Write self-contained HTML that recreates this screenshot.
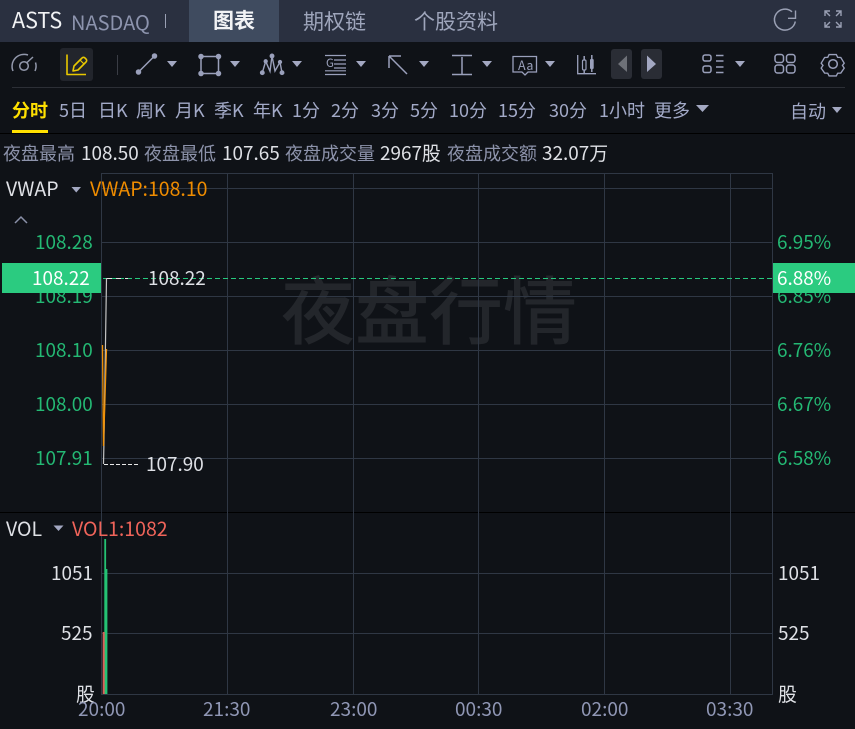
<!DOCTYPE html>
<html lang="zh">
<head>
<meta charset="utf-8">
<style>
html,body{margin:0;padding:0;background:#0f1217}
body{width:855px;height:729px;position:relative;overflow:hidden;font-family:"Noto Sans CJK SC","Liberation Sans",sans-serif}
.t{position:absolute;white-space:nowrap;line-height:24px;height:24px}
.tf{font-size:18px;color:#a3aac8;top:98px}
.g{color:#24b974;font-size:18.9px}
.w{color:#dfe1e6;font-size:18.9px}
.x{color:#9097b5;font-size:19px;top:697px}
.l{top:141px;font-size:18px;color:#8d93ab}
.v{top:141px;font-size:18.9px;color:#dfe1e6}
svg{position:absolute;left:0;top:0}
</style>
</head>
<body>
<div style="position:absolute;left:0;top:0;width:855px;height:42px;background:#2a3040"></div>
<div style="position:absolute;left:189px;top:0;width:90px;height:42px;background:#3f4b5f"></div>
<div style="position:absolute;left:60px;top:48px;width:33px;height:33px;background:#22252c;border-radius:3px"></div>
<div style="position:absolute;left:611px;top:49px;width:21px;height:30px;background:#2a2d35;border-radius:3px"></div>
<div style="position:absolute;left:641px;top:49px;width:21px;height:30px;background:#2a2d35;border-radius:3px"></div>

<div class="t" style="left:281px;top:264px;font-size:74px;line-height:86px;height:86px;color:#23262b;font-weight:500">夜盘行情</div>

<svg width="855" height="729" fill="none">
<!-- separators -->
<path d="M12 87.500H845" stroke="#2c2f36"/>
<path d="M0 133.500H855" stroke="#000"/>
<path d="M117.500 55V75" stroke="#3a3d45"/>
<!-- grid -->
<g stroke="#2f3744">
<path d="M0 512.500H855" stroke="#000"/>
<path d="M102 173.500H772.500M102 188.500H772M102 242.500H772M102 296.500H772M102 350.500H772M102 404.500H772M102 458.500H772"/>
<path d="M102 573.500H772M102 633.500H772M102 694.500H772"/>
<path d="M101.500 173V695M227.500 173V695M353.500 173V695M478.500 173V695M604.500 173V695M730.500 173V695M772.500 173V695"/>
</g>
<!-- dashed last price -->
<path d="M103 278.500H772" stroke="#26c97e" stroke-dasharray="5 3"/>
<path d="M107 278.500H128" stroke="#e8e8e8" stroke-dasharray="5 4"/>
<path d="M104 464.500H140" stroke="#e8e8e8" stroke-dasharray="4 2"/>
<!-- price lines -->
<path d="M103.500 464L104 440L106.500 278" stroke="#c4c4c4" stroke-width="1.200"/>
<path d="M102.500 345L103.500 446L106.500 349" stroke="#f0920a" stroke-width="1.300"/>
<!-- volume -->
<rect x="104.300" y="539" width="1.800" height="155" fill="#24c274"/>
<rect x="106" y="569" width="1.400" height="125" fill="#24c274"/>
<rect x="102.700" y="632" width="2" height="62" fill="#d9605a"/>

<!-- header icons -->
<g stroke="#9aa0b4" stroke-width="1.500">
<path d="M792 11.800A10.500 10.500 0 1 0 795.300 21.500"/>
<path d="M795.500 10.500V18.300H788" stroke-width="1.400"/>
<path d="M825 16V11H830M841 16V11H836M825 22V27H830M841 22V27H836M825.500 11.500L830 16M840.500 11.500L836 16M825.500 26.500L830 22M840.500 26.500L836 22" stroke-width="1.400"/>
</g>

<!-- toolbar icons -->
<g stroke="#9298ab" stroke-width="1.500">
<!-- gauge -->
<path d="M13 71A12 12 0 0 1 28 55M35.500 62.500A12 12 0 0 1 35 71"/>
<circle cx="24" cy="66" r="4.300"/>
<path d="M27 62.500L33 57"/>
</g>
<g stroke="#e9c900" stroke-width="1.600" stroke-linejoin="round">
<path d="M67 54.500V74.500H86"/>
<path d="M73 71l1-5 8-8a2 2 0 0 1 3 0l1 1a2 2 0 0 1 0 3l-8 8z"/>
<path d="M80 60l4 4" stroke-width="1.200"/>
</g>
<g stroke="#9aa0bb" stroke-width="1.500" fill="#9aa0bb">
<!-- line -->
<path d="M139 71.500L154 56.500"/>
<circle cx="138.500" cy="72" r="2"/>
<circle cx="154.500" cy="56" r="2"/>
<!-- rect -->
<path fill="none" d="M201 56.500H218.500V73.500H201Z"/>
<circle cx="201" cy="56.500" r="2"/><circle cx="218.500" cy="56.500" r="2"/>
<circle cx="201" cy="73.500" r="2"/><circle cx="218.500" cy="73.500" r="2"/>
<!-- wave -->
<path fill="none" stroke-width="1.400" d="M262.300 72.700L265.700 61.300L270 71.300L272 56L275 71L280 62L282 72.700"/>
<circle cx="262.300" cy="72.700" r="1.700"/><circle cx="265.700" cy="61.300" r="1.400"/><circle cx="272" cy="56" r="1.700"/><circle cx="280" cy="62" r="1.400"/><circle cx="282" cy="72.700" r="1.700"/>
</g>
<g stroke="#9aa0bb" stroke-width="1.500">
<!-- fib -->
<path d="M325 55.500H346M334 60H346M334 64H346M334 68H346M325 70.800H346M325 74.500H346" stroke-width="1.200"/>
<!-- arrow -->
<path d="M389 56V68M389 56H401M389.500 56.500L407 74"/>
<!-- text T -->
<path d="M452 55.500H472M452 74.500H472M462 57V74"/>
<!-- Aa -->
<path d="M513 56.500H536.500V72H528L525 75L522 72H513Z" fill="none" stroke-width="1.300"/>
<!-- chart -->
<path d="M577.700 55V73.700H596" stroke-width="1.300"/>
<path d="M584.200 56V73M591.800 55V72"/>
<!-- list -->
<rect x="703" y="55" width="8" height="6" rx="2" fill="none"/><rect x="703" y="66" width="8" height="6.500" rx="2" fill="none"/>
<path d="M716 55.500H723.500M716 61H723.500M716 67H723.500M716 72.500H723.500"/>
<!-- grid -->
<rect x="775" y="54.500" width="8.500" height="8" rx="2.500" fill="none"/><rect x="786.500" y="54.500" width="8.500" height="8" rx="2.500" fill="none"/>
<rect x="775" y="65" width="8.500" height="8" rx="2.500" fill="none"/><rect x="786.500" y="65" width="8.500" height="8" rx="2.500" fill="none"/>
<!-- gear -->
<path fill="none" d="M829 54h8l1.500 3 3.500.2 3.800 6.300-2 2.500 2 3-3.800 5.500-3.500.2-1.500 3h-8l-1.500-3-3.500-.2-3.800-5.500 2-3-2-2.500 3.800-6.300 3.500-.2z" transform="translate(83 6) scale(.9)"/>
<circle cx="833" cy="64" r="4.300" fill="none"/>
</g>
<rect x="582.500" y="60" width="3.500" height="10" rx="1.200" fill="#0f1217" stroke="#9aa0bb" stroke-width="1.200"/>
<rect x="590" y="59" width="3.700" height="10" rx="1" fill="#9aa0bb"/>
<!-- toolbar carets -->
<g fill="#a3a8c2">
<path d="M167 61h10l-5 6zM230 61h10l-5 6zM292 61h10l-5 6zM356 61h10l-5 6zM419 61h10l-5 6zM482 61h10l-5 6zM545 61h10l-5 6zM735 61h10l-5 6z"/>
<path d="M696 105h13l-6.500 7zM832 107h10l-5 6zM71.500 187h9.500l-4.750 5.500zM53.500 525.500h10l-5 5.500z"/>
</g>
<path d="M627 55.500V72L618 64Z" fill="#6e7178"/>
<path d="M647 55.500V72L656 64Z" fill="#a3a8c2"/>
<path d="M15 223l6-6 6 6" stroke="#8a90a8" stroke-width="1.500"/>
<!-- underline -->
<rect x="12" y="130" width="36" height="3" fill="#ffe000"/>
<!-- tab divider -->
<path d="M165.500 14V28" stroke="#9aa0b4"/>
</svg>

<div class="t" style="left:12px;top:8px;font-size:21.500px;color:#f2f3f5">ASTS</div>
<div class="t" style="left:71px;top:10px;font-size:20px;color:#8d94ae">NASDAQ</div>
<div class="t" style="left:213px;top:8px;font-size:21px;color:#f2f3f5;font-weight:700">图表</div>
<div class="t" style="left:303px;top:9px;font-size:21px;color:#9ea5bb">期权链</div>
<div class="t" style="left:414px;top:9px;font-size:21px;color:#9ea5bb">个股资料</div>
<div class="t" style="left:326px;top:56px;font-size:11.500px;line-height:15px;height:15px;color:#9aa0bb">G</div>
<div class="t" style="left:518px;top:57px;font-size:12.500px;line-height:15px;height:15px;color:#9aa0bb;letter-spacing:.5px">Aa</div>

<div class="t tf" style="left:12px;color:#ffe000;font-weight:700">分时</div>
<div class="t tf" style="left:59px">5日</div>
<div class="t tf" style="left:98px">日K</div>
<div class="t tf" style="left:136px">周K</div>
<div class="t tf" style="left:175px">月K</div>
<div class="t tf" style="left:214px">季K</div>
<div class="t tf" style="left:253px">年K</div>
<div class="t tf" style="left:292px">1分</div>
<div class="t tf" style="left:331px">2分</div>
<div class="t tf" style="left:371px">3分</div>
<div class="t tf" style="left:410px">5分</div>
<div class="t tf" style="left:449px">10分</div>
<div class="t tf" style="left:498px">15分</div>
<div class="t tf" style="left:549px">30分</div>
<div class="t tf" style="left:599px">1小时</div>
<div class="t tf" style="left:654px">更多</div>
<div class="t tf" style="left:790px;top:99px">自动</div>

<div class="t l" style="left:3px">夜盘最高</div>
<div class="t v" style="left:81px">108.50</div>
<div class="t l" style="left:144px">夜盘最低</div>
<div class="t v" style="left:222px">107.65</div>
<div class="t l" style="left:285px">夜盘成交量</div>
<div class="t v" style="left:380px">2967股</div>
<div class="t l" style="left:447px">夜盘成交额</div>
<div class="t v" style="left:542px">32.07万</div>

<div class="t w" style="left:6px;top:176px;font-size:19.500px">VWAP</div>
<div class="t" style="left:90px;top:176px;font-size:19.500px;color:#ef8c00">VWAP:108.10</div>

<div class="t g" style="left:35px;top:230px">108.28</div>
<div class="t g" style="left:35px;top:284px">108.19</div>
<div class="t g" style="left:35px;top:338px">108.10</div>
<div class="t g" style="left:35px;top:392px">108.00</div>
<div class="t g" style="left:35px;top:446px">107.91</div>
<div class="t g" style="left:777px;top:230px">6.95%</div>
<div class="t g" style="left:777px;top:284px">6.85%</div>
<div class="t g" style="left:777px;top:338px">6.76%</div>
<div class="t g" style="left:777px;top:392px">6.67%</div>
<div class="t g" style="left:777px;top:446px">6.58%</div>

<div style="position:absolute;left:2px;top:263px;width:99px;height:30px;background:#2bcb80"></div>
<div style="position:absolute;left:773px;top:263px;width:82px;height:30px;background:#2bcb80"></div>
<div class="t" style="left:32px;top:266px;font-size:18.900px;color:#fff">108.22</div>
<div class="t" style="left:777px;top:266px;font-size:18.900px;color:#fff">6.88%</div>
<div class="t w" style="left:148px;top:266px">108.22</div>
<div class="t w" style="left:146px;top:452px">107.90</div>

<div class="t w" style="left:6px;top:516px;font-size:19.500px">VOL</div>
<div class="t" style="left:72px;top:516px;font-size:19.500px;color:#f0645a">VOL1:1082</div>
<div class="t w" style="left:51px;top:561px">1051</div>
<div class="t w" style="left:61px;top:621px">525</div>
<div class="t w" style="left:76px;top:682px">股</div>
<div class="t w" style="left:778px;top:561px">1051</div>
<div class="t w" style="left:778px;top:621px">525</div>
<div class="t w" style="left:778px;top:682px">股</div>

<div class="t x" style="left:78px">20:00</div>
<div class="t x" style="left:203px">21:30</div>
<div class="t x" style="left:330px">23:00</div>
<div class="t x" style="left:455px">00:30</div>
<div class="t x" style="left:581px">02:00</div>
<div class="t x" style="left:706px">03:30</div>
</body>
</html>
